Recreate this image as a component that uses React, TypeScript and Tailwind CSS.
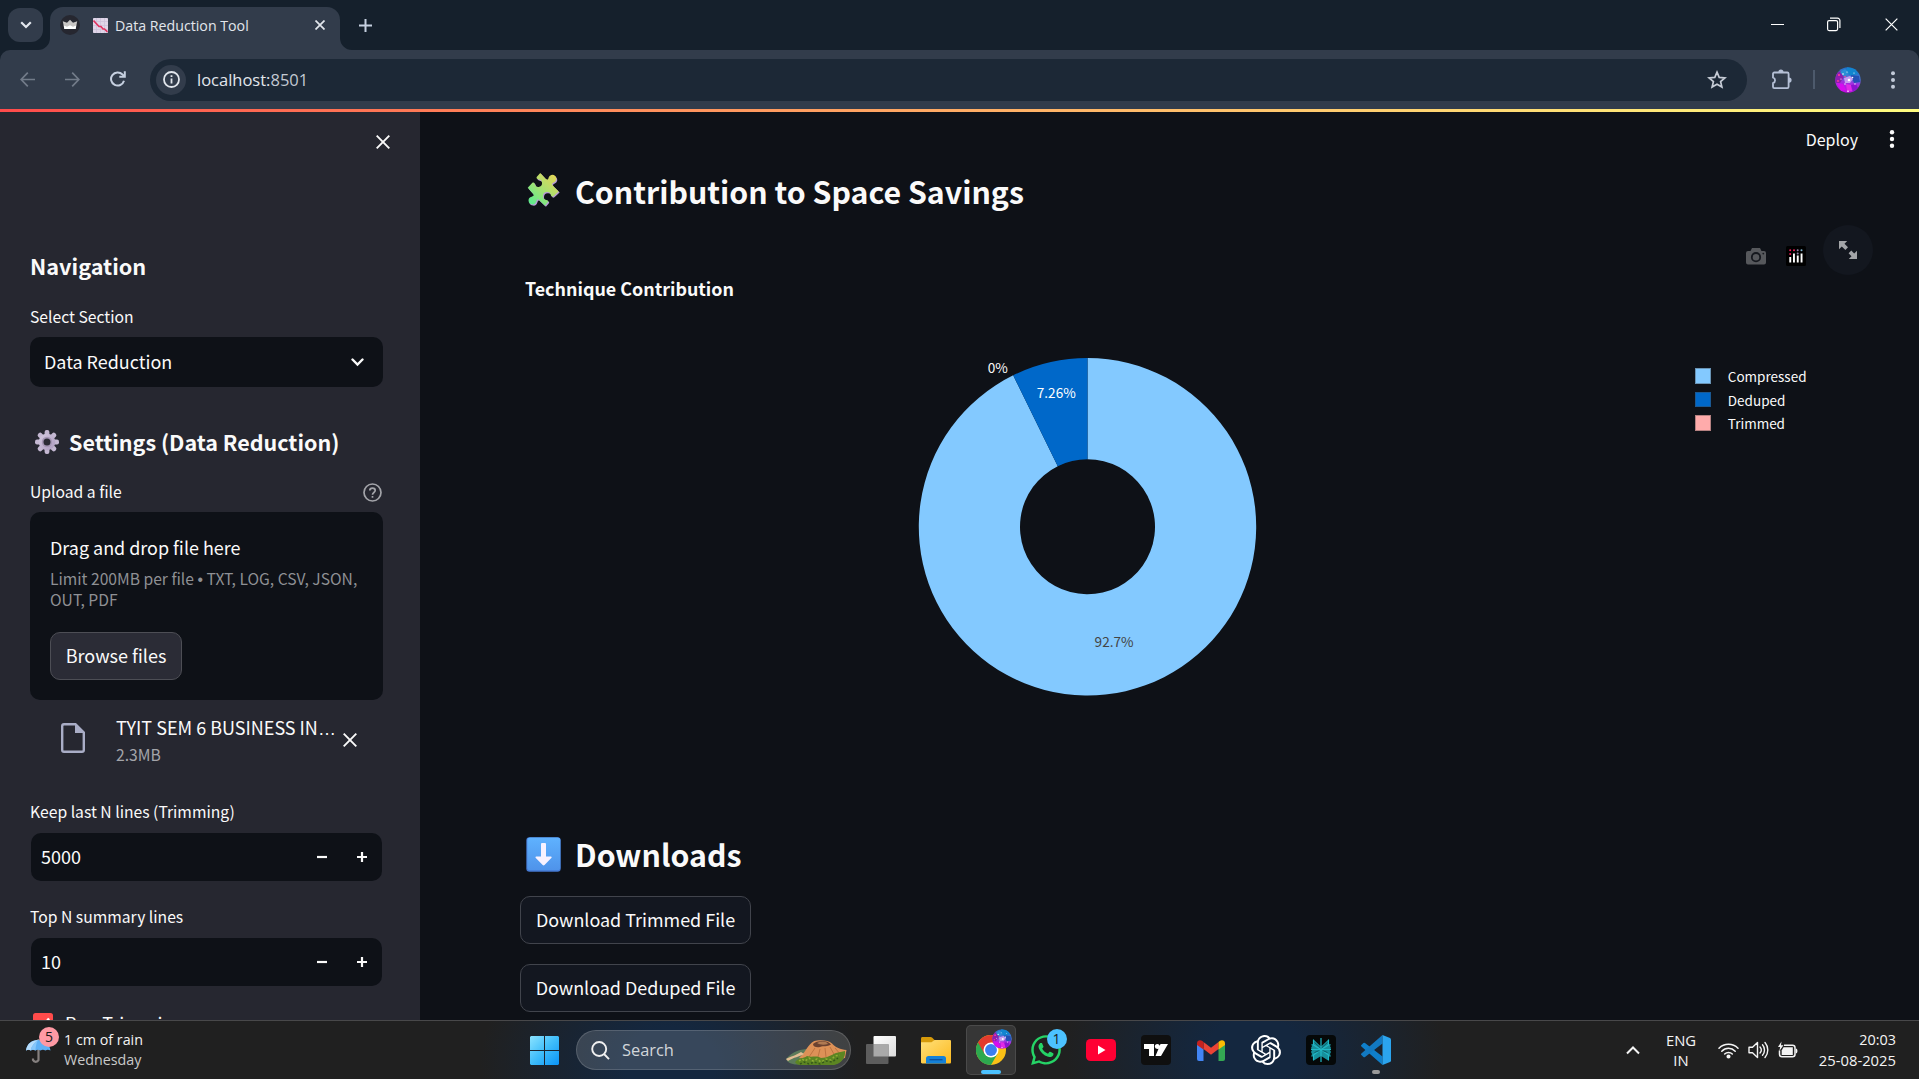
import type { ReactNode } from 'react';
import { SiOpenai } from 'react-icons/si';
import { FaWhatsapp } from 'react-icons/fa';

function Avatar({ size, id }: { size: number; id: string }) {
  return (
    <svg width={size} height={size} viewBox="0 0 26 26">
      <defs>
        <linearGradient id={id} x1="0.6" y1="0" x2="0.4" y2="1">
          <stop offset="0" stopColor="#1b6fc4" />
          <stop offset="0.4" stopColor="#4a78d8" />
          <stop offset="0.6" stopColor="#a42fe0" />
          <stop offset="1" stopColor="#c40be0" />
        </linearGradient>
        <clipPath id={id + 'c'}><circle cx="13" cy="13" r="12.7" /></clipPath>
      </defs>
      <g clipPath={`url(#${id}c)`}>
        <rect width="26" height="26" fill={`url(#${id})`} />
        <path d="M0 6l6-2 3 6-4 6H0z" fill="#8d1fb0" />
        <path d="M12 0l8 2 3 5-7 2-5-4z" fill="#1185cf" />
        <path d="M5 5l5-3 4 4-5 4z" fill="#2a8fd6" />
        <path d="M16 8l8 1 1 6-6 1z" fill="#2350b4" />
        <path d="M9 11l6-2 3 3-3 4-5 0z" fill="#c79af0" />
        <path d="M2 16l6 1 3 6-5 1z" fill="#d80cf0" />
        <path d="M11 17l5 1 1 6-5 0z" fill="#e22be6" />
        <path d="M16 18l5-1 2 4-5 4z" fill="#8a14d0" />
        <g fill="#fff">
          <circle cx="8" cy="7" r="0.8" /><circle cx="12" cy="5" r="0.6" /><circle cx="14" cy="13" r="1.3" />
          <circle cx="17.5" cy="10.5" r="0.8" /><circle cx="6" cy="12" r="0.6" /><circle cx="13" cy="24.3" r="0.8" />
          <circle cx="19" cy="6" r="0.6" /><circle cx="10" cy="17" r="0.7" /><circle cx="20" cy="17" r="0.7" />
        </g>
        <g fill="#ff3b9a"><circle cx="4" cy="8" r="1.1" /><circle cx="10" cy="9.5" r="0.8" /><circle cx="3" cy="14" r="0.9" /></g>
      </g>
    </svg>
  );
}

function Dots({ color, r = 2 }: { color: string; r?: number }) {
  return (
    <svg width="6" height="20" viewBox="0 0 6 20" fill={color}>
      <circle cx="3" cy="3.2" r={r} /><circle cx="3" cy="10" r={r} /><circle cx="3" cy="16.8" r={r} />
    </svg>
  );
}

function Cross({ size, width, color }: { size: number; width: number; color: string }) {
  return (
    <svg width={size} height={size} viewBox="0 0 14 14" fill="none" stroke={color} strokeWidth={width}>
      <path d="M0.7 0.7l12.6 12.6M13.3 0.7L0.7 13.3" />
    </svg>
  );
}

function TabStrip() {
  return (
    <div className="flex h-[50px] shrink-0 items-start bg-[#15202c] pl-2">
      <button className="mt-2 flex h-[34px] w-[35px] items-center justify-center rounded-xl bg-[#323c4b]">
        <svg width="12" height="8" viewBox="0 0 12 8" fill="none" stroke="#e3e7ee" strokeWidth="2.2"><path d="M1.2 1.2L6 6l4.800-4.800" /></svg>
      </button>
      <div className="relative ml-[7px] mt-[7px] flex h-[43px] w-[290px] items-center rounded-t-[13px] bg-[#323c4b] pb-[7px] pl-[10px]">
        <svg className="absolute -left-3 bottom-0" width="12" height="12"><path d="M12 0A12 12 0 0 1 0 12H12z" fill="#323c4b" /></svg>
        <svg className="absolute -right-3 bottom-0" width="12" height="12"><path d="M0 0A12 12 0 0 0 12 12H0z" fill="#323c4b" /></svg>
        <svg width="20" height="20" viewBox="0 0 20 20">
          <circle cx="10" cy="10" r="10" fill="#262730" />
          <path d="M2.800 6.200l4.200 1.600L10 4.800l3 3 4.200-1.600-1.500 7.800H4.300z" fill="#c9c6c4" />
          <path d="M3.800 10.500l3.200 1.200 3-1.500 3 1.500 3.200-1.200-.6 3.500H4.400z" fill="#fff" />
        </svg>
        <svg className="ml-[13px]" width="15" height="15" viewBox="0 0 15 15">
          <rect width="15" height="15" rx="0.800" fill="#dfd5e8" />
          <path d="M3.500 0v15M7.500 0v15M11.500 0v15M0 3.500h15M0 7.500h15M0 11.500h15" stroke="#cbbfd8" strokeWidth="0.700" />
          <path d="M0.500 2.500L6 8.500h2l2 2.500h1.500l3 2.800" fill="none" stroke="#e0315f" strokeWidth="1.600" />
        </svg>
        <span className="ml-[7px] mt-px font-['Open_Sans'] text-[14.2px] leading-5 text-[#e2e6ec]">Data Reduction Tool</span>
        <div className="absolute right-[15px] top-[13px]"><Cross size={10} width={2.400} color="#e2e6ec" /></div>
      </div>
      <svg className="ml-[19px] mt-[19px]" width="13" height="13" viewBox="0 0 13 13" stroke="#c6d0e0" strokeWidth="2"><path d="M6.500 0v13M0 6.500h13" /></svg>
      <div className="ml-auto mt-[17px] flex items-center pr-[21px]">
        <svg width="13" height="15"><path d="M0 7.500h13" stroke="#fff" strokeWidth="1" /></svg>
        <svg className="ml-[43px]" width="14" height="15" viewBox="0 0 14 15" fill="none" stroke="#fff" strokeWidth="1.200">
          <rect x="0.600" y="3.600" width="10" height="10" rx="1.500" />
          <path d="M3 1.200h7.500a2.400 2.400 0 0 1 2.400 2.400V11" />
        </svg>
        <div className="ml-[44px]"><Cross size={13} width={1.300} color="#fff" /></div>
      </div>
    </div>
  );
}

function Toolbar() {
  return (
    <div className="h-[59px] shrink-0 bg-[#15202c]">
      <div className="flex h-full items-center rounded-t-[10px] bg-[#323c4b] pl-5">
        <svg width="15" height="15" viewBox="0 0 15 15" fill="none" stroke="#727b89" strokeWidth="1.700"><path d="M15 7.500H1.200M7.800 0.700L1.200 7.500l6.600 6.800" /></svg>
        <svg className="ml-[30px]" width="15" height="15" viewBox="0 0 15 15" fill="none" stroke="#727b89" strokeWidth="1.700"><path d="M0 7.500h13.800M7.200 0.700l6.600 6.800-6.600 6.800" /></svg>
        <svg className="mb-px ml-[30px]" width="16" height="16" viewBox="0 0 16 16" fill="none" stroke="#c6d0e0" strokeWidth="2"><path d="M14 9.800A6.600 6.600 0 1 1 12.500 3.500l1.500 1.500" /><path d="M14.800 0.300v5.500H9.300" /></svg>
        <div className="ml-[24px] flex h-[42px] w-[1597px] items-center rounded-full bg-[#1c2836] pl-[6px] pr-[20px]">
          <div className="flex size-[30px] items-center justify-center rounded-full bg-[#323c4b]">
            <svg width="17" height="17" viewBox="0 0 17 17" fill="none" stroke="#e2e6ec" strokeWidth="1.800"><circle cx="8.500" cy="8.500" r="7.500" /><path d="M8.500 7.500v5M8.500 4.200v1.900" /></svg>
          </div>
          <span className="ml-[11px] font-['Open_Sans'] text-[16.5px] leading-6 text-[#e2e6ec]">localhost:<span className="text-[#c3c9d2]">8501</span></span>
          <svg className="ml-auto" width="20" height="20" viewBox="0 0 20 20" fill="none" stroke="#c6ccd6" strokeWidth="1.700"><path d="M10 2.200l2.200 5.200 5.700.5-4.300 3.700 1.300 5.500L10 14.200l-4.900 2.900 1.300-5.500-4.300-3.700 5.700-.5z" /></svg>
        </div>
        <svg className="ml-[24px]" width="22" height="22" viewBox="0 0 22 22">
          <path d="M3.300 3.500h13a1.300 1.300 0 0 1 1.300 1.300v13a1.300 1.300 0 0 1-1.300 1.300h-13a1.300 1.300 0 0 1-1.300-1.300V14.200a3 3 0 0 0 0-5.700V4.800a1.300 1.300 0 0 1 1.300-1.300z" fill="none" stroke="#b5c0d6" strokeWidth="1.800" />
          <path d="M7.300 3.200a2.600 2.600 0 0 1 5.200 0zM18 8.500a2.600 2.600 0 0 1 0 5.200z" fill="#b5c0d6" />
        </svg>
        <div className="ml-[20px] h-[19px] w-[2px] bg-[#4d5a6c]" />
        <div className="ml-[20px]"><Avatar size={26} id="av1" /></div>
        <div className="ml-[29px]"><Dots color="#c2cad8" r={2} /></div>
      </div>
    </div>
  );
}

function Label({ children }: { children: ReactNode }) {
  return <div className="h-6 text-[15.7px] leading-6">{children}</div>;
}

function NumberInput({ value }: { value: string }) {
  return (
    <div className="mx-px mt-[9px] flex h-12 items-center rounded-[10px] bg-[#0e1117] pl-[10px] pr-[15px]">
      <span className="mb-[2px] text-[18px] leading-6">{value}</span>
      <svg className="ml-auto" width="10" height="10"><path d="M0 5h10" stroke="#fafafa" strokeWidth="2.200" /></svg>
      <svg className="ml-[30px]" width="10" height="10"><path d="M0 5h10M5 0v10" stroke="#fafafa" strokeWidth="2.200" /></svg>
    </div>
  );
}

function Sidebar() {
  const teeth = [0, 45, 90, 135, 180, 225, 270, 315];
  return (
    <aside className="flex w-[420px] shrink-0 flex-col overflow-hidden bg-[#262730] pl-[30px] pr-[37px] text-[#fafafa]">
      <div className="-mr-[7px] flex h-[59px] shrink-0 items-center justify-end"><Cross size={14} width={1.900} color="#fafafa" /></div>
      <h2 className="mt-20 h-[30px] shrink-0 text-[21.7px] font-bold leading-[30px]">Navigation</h2>
      <div className="mt-6 shrink-0"><Label>Select Section</Label></div>
      <div className="mt-2 flex h-[50px] shrink-0 items-center rounded-[10px] bg-[#0e1117] pl-[14px] pr-[19px]">
        <span className="mb-[2px] text-[17.950px] leading-6">Data Reduction</span>
        <svg className="ml-auto" width="13" height="9" viewBox="0 0 13 9" fill="none" stroke="#fafafa" strokeWidth="2.400" strokeLinecap="round"><path d="M1.500 1.500l5 5 5-5" /></svg>
      </div>
      <h2 className="mb-[-1px] mt-10 flex h-[30px] shrink-0 items-center whitespace-nowrap text-[21.500px] font-bold leading-[30px]">
        <svg className="ml-[5px] mr-[10px]" width="24" height="24" viewBox="0 0 24 24">
          <defs><linearGradient id="gear" x1="0" y1="0" x2="1" y2="1"><stop offset="0" stopColor="#d5cbe2" /><stop offset="1" stopColor="#ab99bd" /></linearGradient></defs>
          <g fill="#c4b8d2">
            {teeth.map((a) => <rect key={a} x="9.600" y="0" width="4.800" height="8" rx="2" transform={`rotate(${a} 12 12)`} />)}
          </g>
          <circle cx="12" cy="12" r="8.300" fill="url(#gear)" />
          <circle cx="12" cy="12" r="5.200" fill="#a596b5" />
          <circle cx="12" cy="12" r="3.500" fill="#2b2b35" />
        </svg>
        Settings (Data Reduction)
      </h2>
      <div className="mt-6 flex shrink-0 items-center justify-between">
        <Label>Upload a file</Label>
        <svg className="mr-px" width="19" height="19" viewBox="0 0 19 19" fill="none" stroke="#a3a4a9" strokeWidth="1.700">
          <circle cx="9.500" cy="9.500" r="8.500" />
          <path d="M6.800 7.600c0-3.300 5.400-3.300 5.400 0 0 1.900-2.700 2-2.700 4.100M9.500 12.900v1.900" />
        </svg>
      </div>
      <div className="mt-2 flex h-[188px] shrink-0 flex-col items-start rounded-[10px] bg-[#0e1117] px-5 pt-[23px]">
        <div className="h-6 text-[17.950px] leading-6">Drag and drop file here</div>
        <div className="mt-[9px] h-[42px] whitespace-nowrap text-[15.650px] leading-[21px] text-[#8e9094]">
          Limit 200MB per file <span className="font-['Liberation_Sans'] leading-none">•</span> TXT, LOG, CSV, JSON,<br />OUT, PDF
        </div>
        <button className="mt-[22px] flex h-12 w-[132px] items-center justify-center rounded-[10px] border border-[#4d4e55] bg-[#2b2c36] pb-[2px] text-[18px] leading-6">Browse files</button>
      </div>
      <div className="mt-[15px] flex h-[51px] shrink-0 items-center pl-[31px]">
        <svg className="mb-[5px]" width="24" height="30" viewBox="0 0 24 30">
          <path d="M3 1.200h11.500L22.800 9.500V27a1.800 1.800 0 0 1-1.800 1.800H3A1.800 1.800 0 0 1 1.200 27V3A1.800 1.800 0 0 1 3 1.200z" fill="none" stroke="#a9adc6" strokeWidth="2.400" />
          <path d="M14 0.500V10h9.500z" fill="#a9adc6" />
        </svg>
        <div className="ml-[31px] w-[221px]">
          <div className="h-6 whitespace-nowrap text-[18px] leading-6">TYIT SEM 6 BUSINESS IN<span className="font-['Liberation_Sans'] leading-none">…</span></div>
          <div className="mt-1 h-6 text-[15.7px] leading-6 text-[#a3a4a9]">2.3MB</div>
        </div>
        <div className="ml-[6px] mt-[-2px]"><Cross size={14} width={1.900} color="#fafafa" /></div>
      </div>
      <div className="mt-[34px] shrink-0"><Label>Keep last N lines (Trimming)</Label><NumberInput value="5000" /></div>
      <div className="mt-6 shrink-0"><Label>Top N summary lines</Label><NumberInput value="10" /></div>
      <div className="mt-[25px] flex h-6 shrink-0 items-center pl-[3px]">
        <svg width="20" height="20" viewBox="0 0 20 20"><rect width="20" height="20" rx="2.500" fill="#ff4b4b" /><path d="M4.500 10.500l4 4L16 5.500" fill="none" stroke="#fff" strokeWidth="2.400" /></svg>
        <span className="ml-3 text-[18px] leading-6">Run Trimming</span>
      </div>
    </aside>
  );
}

const legend = [
  { name: 'Compressed', swatch: 'bg-[#83c9ff]' },
  { name: 'Deduped', swatch: 'bg-[#0068c9]' },
  { name: 'Trimmed', swatch: 'bg-[#ffabab]' },
];

function Donut() {
  const cx = 170.500, cy = 170.800, R = 168.700, r = 67.500;
  const a = (7.26 / 100) * Math.PI * 2;
  const at = (rad: number) => `${cx - rad * Math.sin(a)} ${cy - rad * Math.cos(a)}`;
  return (
    <svg width="342" height="342" viewBox="0 0 342 342" className="shrink-0 overflow-visible font-['Noto_Sans_CJK_SC',sans-serif] text-[13.6px]">
      <path d={`M${cx} ${cy - R}A${R} ${R} 0 1 1 ${at(R)}L${at(r)}A${r} ${r} 0 1 0 ${cx} ${cy - r}Z`} fill="#83c9ff" />
      <path d={`M${at(R)}A${R} ${R} 0 0 1 ${cx} ${cy - R}L${cx} ${cy - r}A${r} ${r} 0 0 0 ${at(r)}Z`} fill="#0068c9" />
      <text x="70.800" y="17" fill="#fafafa">0%</text>
      <text x="119.800" y="42.300" fill="#fff">7.26%</text>
      <text x="177.600" y="291" fill="#444">92.7%</text>
    </svg>
  );
}

function DownloadButton({ children }: { children: ReactNode }) {
  return <button className="flex h-12 w-[231px] items-center justify-center rounded-[10px] border border-[#41444c] bg-[#131720] pb-[2px] text-[17.950px] leading-6">{children}</button>;
}

function Main() {
  return (
    <main className="flex min-w-0 flex-1 flex-col overflow-hidden bg-[#0e1117] text-[#fafafa]">
      <div className="flex h-[54px] shrink-0 items-center justify-end pr-6">
        <span className="mb-px text-[16px] leading-6">Deploy</span>
        <div className="ml-[31px]"><Dots color="#fafafa" r={2.200} /></div>
      </div>
      <h2 className="mt-[7px] flex h-9 shrink-0 items-center pl-[106px] text-[30.3px] font-bold leading-9">
        <svg className="mb-[2px] mr-[13px]" width="36" height="36" viewBox="0 0 36 38">
          <defs><linearGradient id="puz" x1="0.850" y1="0.100" x2="0.150" y2="0.900"><stop offset="0" stopColor="#dfd75a" /><stop offset="0.500" stopColor="#a9e070" /><stop offset="1" stopColor="#62ea8c" /></linearGradient></defs>
          <g id="pz" transform="translate(1 1.200)" fill="#b79ad6">
            <path d="M14 1L20 7.500C21.500 8.500 22.500 8 22.800 6A4.200 4.200 0 1 1 28.500 11C26.500 11.500 26 12.800 27 14L33.500 20.500 28 25.500C27 26.400 25.700 26 25.300 24.500A4.200 4.200 0 1 0 20.500 29.500C22.500 30 23 31 22 32L19 35.500 12.500 29.300C11.300 28.400 10.600 29 10 31A4.200 4.200 0 1 1 5 26C7 25.400 7.800 24.500 6.500 23L0.800 16.500 5.500 11.500C6.700 10.600 7.600 11 8.200 12.500A3.900 3.900 0 1 0 12.500 8C10.500 7.500 9.500 6.500 10.500 5Z" />
          </g>
          <path d="M14 1L20 7.500C21.500 8.500 22.500 8 22.800 6A4.200 4.200 0 1 1 28.500 11C26.500 11.500 26 12.800 27 14L33.500 20.500 28 25.500C27 26.400 25.700 26 25.300 24.500A4.200 4.200 0 1 0 20.500 29.500C22.500 30 23 31 22 32L19 35.500 12.500 29.300C11.300 28.400 10.600 29 10 31A4.200 4.200 0 1 1 5 26C7 25.400 7.800 24.500 6.500 23L0.800 16.500 5.500 11.500C6.700 10.600 7.600 11 8.200 12.500A3.900 3.900 0 1 0 12.500 8C10.500 7.500 9.500 6.500 10.500 5Z" fill="url(#puz)" />
        </svg>
        Contribution to Space Savings
      </h2>
      <div className="mt-4 flex h-[50px] shrink-0 items-center justify-end pr-[46px]">
        <svg className="mt-3" width="20" height="17" viewBox="0 0 20 17">
          <path d="M6 0h8l1.500 3H18a2 2 0 0 1 2 2v9.500a2 2 0 0 1-2 2H2a2 2 0 0 1-2-2V5a2 2 0 0 1 2-2h2.500z" fill="#56585c" />
          <circle cx="10" cy="9.200" r="4.200" fill="none" stroke="#15181e" strokeWidth="1.800" />
          <circle cx="17.300" cy="5.600" r="0.900" fill="#15181e" />
        </svg>
        <svg className="ml-5 mt-3" width="20" height="20" viewBox="0 0 20 20">
          <rect width="20" height="20" rx="1.500" fill="#000" />
          <g fill="#fff"><rect x="3.300" y="11" width="1.900" height="5.500" /><rect x="7" y="7.500" width="1.900" height="9" /><rect x="10.800" y="9.500" width="1.900" height="7" /><rect x="14.600" y="7.500" width="1.900" height="9" /></g>
          <g fill="#ef1b5c"><circle cx="4.200" cy="4.200" r="1" /><circle cx="4.200" cy="8" r="1" /><circle cx="8" cy="4.200" r="1" /></g>
          <g fill="#8f7fa8"><circle cx="11.700" cy="4.200" r="1" /><circle cx="11.700" cy="7.500" r="1" /></g>
          <circle cx="15.500" cy="4.200" r="1" fill="#7fb6d2" />
        </svg>
        <button className="ml-[17px] flex size-[50px] items-center justify-center rounded-full bg-[#13171f]">
          <svg width="18" height="18" viewBox="0 0 18 18" fill="#a3a5a8"><path d="M0 0h8.200L5.500 2.700 9 6.200 6.400 9 2.800 5.500 0 8.200zM18 18H9.800l2.700-2.700L9.600 12.300 12.300 9.600l2.900 2.900L18 9.800z" /></svg>
        </button>
      </div>
      <div className="mt-px h-6 shrink-0 pl-[105px] text-[17.9px] font-bold leading-6">Technique Contribution</div>
      <div className="mt-14 flex h-[342px] shrink-0 items-start pl-[497px]">
        <Donut />
        <ul className="ml-[436px] mt-2">
          {legend.map((l) => (
            <li key={l.name} className="flex h-[23.700px] items-center">
              <span className={`${l.swatch} size-[15.500px] border border-[#444]/40`} />
              <span className="ml-[17.300px] text-[13.5px] leading-6">{l.name}</span>
            </li>
          ))}
        </ul>
      </div>
      <h2 className="mt-[138px] flex h-9 shrink-0 items-center pl-[106px] text-[30.3px] font-bold leading-9">
        <svg className="mr-[14px]" width="35" height="35" viewBox="0 0 35 35">
          <defs><linearGradient id="dl" x1="0" y1="0" x2="0" y2="1"><stop offset="0" stopColor="#5fb2ff" /><stop offset="1" stopColor="#4f93ea" /></linearGradient></defs>
          <rect x="0.300" y="0.300" width="34.400" height="34.400" rx="3.200" fill="#4478d2" />
          <rect x="1.300" y="0.600" width="33" height="32.600" rx="2.800" fill="url(#dl)" />
          <path d="M16 6h3a1 1 0 0 1 1 1v12.500h4.800c1 0 1.200.9.500 1.500L18.500 28c-.6.500-1.200.5-1.800 0l-6.900-7c-.6-.7-.4-1.500.5-1.500H15V7a1 1 0 0 1 1-1z" fill="#f8f2ff" />
        </svg>
        Downloads
      </h2>
      <div className="mt-6 flex shrink-0 flex-col gap-5 pl-[100px]">
        <DownloadButton>Download Trimmed File</DownloadButton>
        <DownloadButton>Download Deduped File</DownloadButton>
      </div>
    </main>
  );
}

function TaskbarApp({ children }: { children?: ReactNode }) {
  return <div className="relative flex h-[50px] w-[55px] items-center justify-center">{children}</div>;
}

function Taskbar() {
  return (
    <footer className="flex h-[59px] shrink-0 items-center border-t border-[#48484a] bg-[#202020] bg-[radial-gradient(ellipse_190px_130px_at_670px_40px,#14273f_0%,#14273f_25%,transparent_100%),radial-gradient(ellipse_190px_130px_at_1255px_30px,#14273f_0%,#14273f_25%,transparent_100%)] font-['Open_Sans'] text-[#f4f4f4]">
      <div className="flex w-[517px] items-center pl-[26px]">
        <div className="relative h-[30px] w-[27px]">
          <svg className="absolute left-0 top-0" width="26" height="30" viewBox="0 0 26 30">
            <path d="M12.500 4v21a3 3 0 0 1-5.500 0v-1.500" fill="none" stroke="#85807f" strokeWidth="2.200" />
            <path d="M0 15.500C1 8.500 6 5 12 5s11.500 3.500 12.500 10.500c-2-1-3.500-1-5 0-2-1-3.500-1-5 0-2-1-3.500-1-5 0-2-1-3.200-1-4.800 0-1.500-.9-3-.9-4.700 0z" fill="#5fb0f5" />
            <path d="M0 15.500C1 8.500 6 5 12 5 8.500 7.500 5.500 11 4.700 15.500c-1.500-.9-3-.9-4.700 0z" fill="#b5dcfb" />
            <path d="M12 5c-1.800 3-2.300 6.500-2.500 10.500-2-1-3.200-1-4.800 0C5.500 11 8.500 7.500 12 5z" fill="#86c6fa" />
          </svg>
          <div className="absolute left-[13px] top-[-8px] flex size-5 items-center justify-center rounded-full bg-[#ff99a4] text-[14px] leading-5 text-[#1b1b1b]">5</div>
        </div>
        <div className="ml-[11px] text-[14.3px] leading-5">
          <div>1 cm of rain</div>
          <div className="text-[#c9c9c9]">Wednesday</div>
        </div>
      </div>
      <svg className="ml-[13px]" width="29" height="29" viewBox="0 0 29 29">
        <defs><linearGradient id="win" x1="0" y1="0" x2="1" y2="1"><stop offset="0" stopColor="#8be3ff" /><stop offset="0.500" stopColor="#3fbdfa" /><stop offset="1" stopColor="#0a93f7" /></linearGradient></defs>
        <path d="M1 0h13v14H0V1zM15 0h13l1 1v13H15zM0 15h14v14H1l-1-1zM15 15h14v13l-1 1H15z" fill="url(#win)" />
      </svg>
      <div className="ml-[17px] flex h-10 w-[275px] items-center rounded-full border border-white/15 bg-white/15 pl-[14px]">
        <svg width="19" height="19" viewBox="0 0 19 19" fill="none" stroke="#f0f0f0" strokeWidth="1.900"><circle cx="8.200" cy="8" r="7" /><path d="M13 13l5 5.200" /></svg>
        <span className="ml-[12px] text-[16.400px] leading-6 text-[#d2d6da]">Search</span>
        <svg className="ml-auto mr-[3px] mt-1" width="62" height="27" viewBox="0 0 62 27">
          <path d="M1 20C8 12 16 10 24 10l36 1c1 7-3 13-11 14.500H12C6 25.500 2 23 1 20z" fill="#5b7a5a" />
          <path d="M14 19C22 12 24 2 32 1.500c6-.5 12 0 15 3 4 4 8 6 14.500 6.500L60 19l-22 4z" fill="#dd9157" />
          <path d="M28 5c4-4 15-4 18 .5-4 2.500-7 1-11 2.500-3 .8-7 0-7-3z" fill="#6b4230" />
          <path d="M32 4c4-2 9-2 11 1-4 1-8 1-11-1z" fill="#b07a52" />
          <path d="M30 9l-6 9M35 10l-2 8M40 9l1 9M45 8l5 9M50 9l6 7" stroke="#b96f3d" strokeWidth="0.900" fill="none" />
          <path d="M1 20c5-3 9-3 15-7l3 2c-5 3-10 3-16 7z" fill="#e2bd94" />
          <path d="M10 23c4-5 8-3 12-6 5 2 9-1 14 2 6 0 10-3 15-5l9-2c1 6-4 13-11 14H16c-3 0-5-1-6-3z" fill="#5c8522" />
          <path d="M14 22l3-2 3 2 4-3 4 3 4-2 4 3 5-3 5 1 4-4 5-1" stroke="#8fae35" strokeWidth="1.500" fill="none" strokeDasharray="2 2" />
          <path d="M15 25l4-2 5 2 5-2 6 2 6-3 6 1 6-4" stroke="#36591a" strokeWidth="1.500" fill="none" strokeDasharray="2 2" />
        </svg>
      </div>
      <div className="ml-[2px] flex items-center">
        <TaskbarApp>
          <svg width="30" height="28" viewBox="0 0 30 28">
            <defs><linearGradient id="tv" x1="0" y1="0" x2="1" y2="1"><stop offset="0" stopColor="#fff" /><stop offset="1" stopColor="#dcdcdc" /></linearGradient></defs>
            <rect x="7.500" y="0" width="22.500" height="20.500" rx="1" fill="url(#tv)" />
            <rect x="0" y="8" width="22.500" height="20" rx="1" fill="#5d5d5d" />
            <path d="M7.500 8h15v12.500h-15z" fill="#a9a9a9" />
          </svg>
        </TaskbarApp>
        <TaskbarApp>
          <svg width="30" height="27" viewBox="0 0 30 27">
            <defs><linearGradient id="fo" x1="0" y1="0" x2="1" y2="1"><stop offset="0" stopColor="#ffe07a" /><stop offset="1" stopColor="#fcb91e" /></linearGradient></defs>
            <path d="M0 1.500C0 .7.600 0 1.500 0h8c.8 0 1.300.3 1.800.8L13.500 3v5H0z" fill="#d69a0a" />
            <path d="M0 5.200h10.500L13.500 3H28.700c.8 0 1.300.5 1.300 1.300v21c0 .8-.5 1.200-1.300 1.200H1.300C.5 26.500 0 26 0 25.300z" fill="url(#fo)" />
            <path d="M5 21.500a2.500 2.500 0 0 1 2.500-2.500h15a2.500 2.500 0 0 1 2.500 2.500v5H5z" fill="#1481d8" />
            <path d="M8.500 22.700h13" stroke="#0b4f9e" strokeWidth="1.300" />
          </svg>
        </TaskbarApp>
        <TaskbarApp>
          <div className="absolute left-[2.500px] top-0 size-[50px] rounded-[5px] border border-white/10 bg-white/10" />
          <svg className="relative" width="30" height="30" viewBox="0 0 48 48">
            <circle cx="24" cy="24" r="24" fill="#fbc116" />
            <path d="M24 24L3.215 12A24 24 0 0 0 24 48L34.400 30z" fill="#2da94f" />
            <path d="M3.215 12A24 24 0 0 1 44.785 12H24L13.600 30z" fill="#e33b2e" />
            <circle cx="24" cy="24" r="12" fill="#fff" /><circle cx="24" cy="24" r="9.500" fill="#3a7ff0" />
          </svg>
          <div className="absolute left-[28.500px] top-[4px]"><Avatar size={20} id="av2" /></div>
          <div className="absolute bottom-[1px] left-[17.500px] h-1 w-5 rounded-full bg-[#4cc2ff]" />
        </TaskbarApp>
        <TaskbarApp>
          <FaWhatsapp size={34} color="#25d366" />
          <div className="absolute left-[28.500px] top-[4px] flex size-5 items-center justify-center rounded-full bg-[#4cc2ff] text-[14px] leading-5 text-[#1b1b1b]">1</div>
        </TaskbarApp>
        <TaskbarApp>
          <svg width="30" height="22" viewBox="0 0 30 22"><rect width="30" height="22" rx="4.500" fill="#ff0033" /><path d="M12 6.500v9l7.500-4.500z" fill="#fff" /></svg>
        </TaskbarApp>
        <TaskbarApp>
          <svg width="30" height="30" viewBox="0 0 30 30">
            <rect width="30" height="30" rx="4" fill="#0f0f0f" />
            <path d="M3 9h10v12H8v-7H3zM20 21h-5.500l5-12H27zM16.300 9a2.500 2.500 0 1 1 0 5 2.500 2.500 0 0 1 0-5z" fill="#fff" />
          </svg>
        </TaskbarApp>
        <TaskbarApp>
          <svg width="28" height="21" viewBox="0 0 28 21">
            <path d="M0 4l6.500 4.500V21H2a2 2 0 0 1-2-2z" fill="#4285f4" />
            <path d="M28 4l-6.500 4.500V21H26a2 2 0 0 0 2-2z" fill="#34a853" />
            <path d="M6.500 2L14 7.700 21.500 2v7L14 14.700 6.500 9z" fill="#ea4335" />
            <path d="M21.500 2l1.200-1C25 -.8 28 .5 28 3.200V5l-6.500 4.500z" fill="#fbbc04" />
            <path d="M6.500 2L5.300 1C3-.8 0 .5 0 3.200V5l6.500 4.500z" fill="#c5221f" />
          </svg>
        </TaskbarApp>
        <TaskbarApp><SiOpenai size={30} color="#fff" /></TaskbarApp>
        <TaskbarApp>
          <svg width="30" height="30" viewBox="0 0 30 30">
            <rect width="30" height="30" rx="4" fill="#050808" />
            <g fill="#17909c">
              <path d="M7 4l8 7.500V21l-8 5v-4.500H5l1-2.500-1-2 1-2-1-2 1-2-1-1.500 2-.5z" />
              <path d="M23 4l-8 7.500V21l8 5v-4.500h2L24 19l1-2-1-2 1-2-1-2 1-1.500-2-.5z" />
            </g>
            <g stroke="#21b8c6" strokeWidth="1.200" fill="none">
              <path d="M15 3v24M7.500 4.800V10L15 14.500 22.500 10V4.800M7.500 25v-5L15 14.500l7.500 5.500v5M5 14.500h20" />
            </g>
            <path d="M8.500 7.500l6 5.500M21.500 7.500l-6 5.500M8.500 17.500l5-2M21.500 17.500l-5-2" stroke="#0a5660" strokeWidth="0.900" />
          </svg>
        </TaskbarApp>
        <TaskbarApp>
          <svg width="30" height="30" viewBox="0 0 30 30">
            <path d="M21.500 30L.4 11.400a1 1 0 0 1 0-1.500l2-1.800a1.200 1.200 0 0 1 1.600 0L21.500 21.500z" fill="#0f7fcb" />
            <path d="M21.500 0L.4 18.600a1 1 0 0 0 0 1.500l2 1.800a1.200 1.200 0 0 0 1.600 0L21.500 8.500z" fill="#1279c2" />
            <path d="M21.500 0L29 3a1.800 1.800 0 0 1 1 1.600v20.800a1.800 1.800 0 0 1-1 1.600l-7.500 3z" fill="#2ba4ee" />
          </svg>
          <div className="absolute bottom-[1px] left-[23.500px] h-1 w-2 rounded-full bg-[#9a9a9a]" />
        </TaskbarApp>
      </div>
      <div className="ml-auto flex items-center pr-[23px]">
        <svg width="14" height="9" viewBox="0 0 14 9" fill="none" stroke="#f4f4f4" strokeWidth="2"><path d="M1 7.500l6-6 6 6" /></svg>
        <div className="ml-[26px] w-[30px] text-center text-[14.8px] leading-5"><div>ENG</div><div>IN</div></div>
        <svg className="ml-[22px]" width="21" height="17" viewBox="0 0 21 17" fill="none" stroke="#f4f4f4" strokeWidth="1.500" strokeLinecap="round">
          <path d="M1 6.200a13.300 13.300 0 0 1 19 0M3.800 9.200a9.300 9.300 0 0 1 13.400 0M6.700 12a5.300 5.300 0 0 1 7.600 0" /><circle cx="10.500" cy="14.500" r="1.300" fill="#f4f4f4" />
        </svg>
        <svg className="ml-[9px]" width="21" height="18" viewBox="0 0 21 18" fill="none" stroke="#f4f4f4" strokeWidth="1.400" strokeLinejoin="round" strokeLinecap="round">
          <path d="M1 6.200h3.500L9.500 1.500v15L4.500 11.800H1z" /><path d="M12 6a4.500 4.500 0 0 1 0 6M14.500 3.700a8 8 0 0 1 0 10.600M17 1.500a11.500 11.500 0 0 1 0 15" />
        </svg>
        <svg className="ml-[8px]" width="22" height="18" viewBox="0 0 22 18">
          <path d="M7 4.200h8.500a2.500 2.500 0 0 1 2.500 2.500v6.600a2.500 2.500 0 0 1-2.500 2.500H5a2.500 2.500 0 0 1-2.500-2.500V9.500" fill="none" stroke="#f4f4f4" strokeWidth="1.500" />
          <path d="M6.500 6.200h9.300v7.700H4.700V9.500z" fill="#f4f4f4" />
          <path d="M18.800 7.500c2.200 0 2.200 5 0 5zM4.500 0.500L1 6h2.200L2.300 10 6.500 4.300H4z" fill="#f4f4f4" />
        </svg>
        <div className="ml-[18px] w-[79px] whitespace-nowrap text-right text-[14.8px] leading-5"><div className="text-[14.4px] leading-5">20:03</div><div>25-08-2025</div></div>
      </div>
    </footer>
  );
}

export default function App() {
  return (
    <div className="flex h-[1079px] w-[1919px] flex-col overflow-hidden bg-[#0e1117] font-['Noto_Sans_CJK_SC',sans-serif]">
      <TabStrip />
      <Toolbar />
      <div className="h-[3px] shrink-0 bg-linear-to-r from-[#ff4b4b] to-[#fffd80]" />
      <div className="flex min-h-0 flex-1"><Sidebar /><Main /></div>
      <Taskbar />
    </div>
  );
}
